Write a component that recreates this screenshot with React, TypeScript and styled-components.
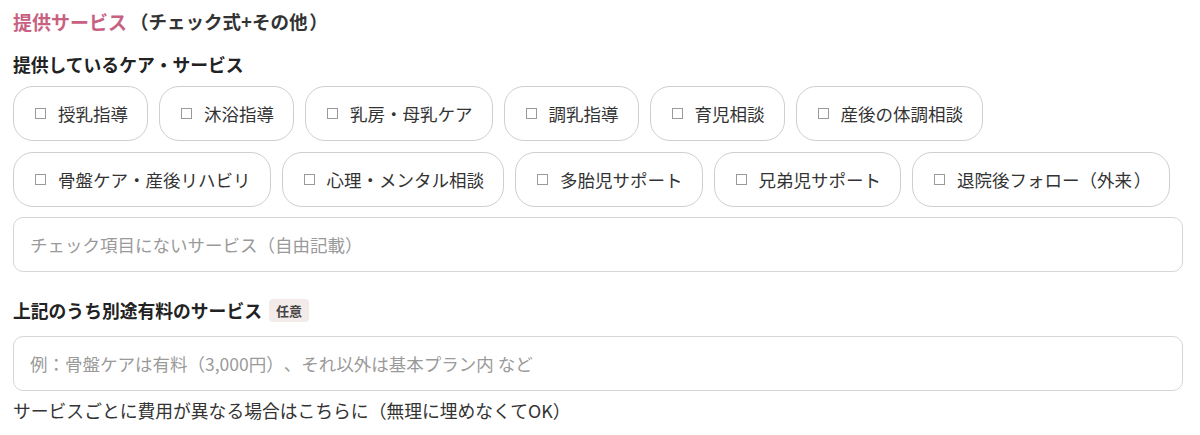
import React from "react";
import styled, { createGlobalStyle } from "styled-components";

const Global = createGlobalStyle`
  html, body { margin: 0; padding: 0; background: #ffffff; }
  body {
    font-family: "Noto Sans CJK JP", "Noto Sans", sans-serif;
    color: #333333;
    text-spacing-trim: space-all;
  }
  * { box-sizing: border-box; }
`;

const Page = styled.div`
  width: 1200px;
  padding: 7px 17px 0 13px;
  display: flex;
  flex-direction: column;
`;

const SectionTitle = styled.h2`
  margin: 0;
  height: 28px;
  display: flex;
  align-items: center;
  font-size: 19px;
  font-weight: 700;
  color: #c8617f;
`;

const TitleNote = styled.span`
  margin-left: 3px;
  font-size: 18.5px;
  color: #333333;
`;

const Punct = styled.span<{ $open?: boolean }>`
  display: inline-block;
  width: 1em;
  text-align: ${(p) => (p.$open ? "right" : "left")};
  padding: ${(p) => (p.$open ? "0 0.1em 0 0" : "0 0 0 0.1em")};
`;

const FieldLabel = styled.div<{ $mt: number }>`
  margin-top: ${(p) => p.$mt}px;
  height: 26px;
  display: flex;
  align-items: center;
  font-size: 17.8px;
  font-weight: 700;
  color: #222222;
`;

const Badge = styled.span`
  margin-left: 7px;
  padding: 2px 7px;
  border-radius: 4px;
  background: #f3ebea;
  color: #444444;
  font-size: 13px;
  font-weight: 700;
  line-height: 19px;
`;

const ChipGrid = styled.div`
  margin-top: 9px;
  display: flex;
  flex-wrap: wrap;
  gap: 11px 11px;
`;

const Chip = styled.label`
  height: 55px;
  display: inline-flex;
  align-items: center;
  padding: 0 19px 0 21px;
  border: 1px solid #cfcfcf;
  border-radius: 20px;
  background: #ffffff;
  font-size: 17.5px;
  color: #333333;
  white-space: nowrap;
`;

const Box = styled.span`
  width: 11px;
  height: 11px;
  border: 1px solid #9a9a9a;
  margin-right: 12px;
  flex: none;
`;

const TextField = styled.input<{ $mt: number }>`
  width: 100%;
  height: 55px;
  margin-top: ${(p) => p.$mt}px;
  padding: 0 16px;
  border: 1px solid #d6d6d6;
  border-radius: 10px;
  font-family: inherit;
  font-size: 17.5px;
  color: #333333;
  outline: none;
  &::placeholder { color: #9a9a9a; }
`;

const Help = styled.div`
  margin-top: 6px;
  font-size: 17.8px;
  color: #333333;
  line-height: 26px;
`;

function Jp({ text }: { text: string }) {
  const parts = text.split(/([（）])/).filter((p) => p !== "");
  return (
    <>
      {parts.map((p, i) =>
        p === "（" || p === "）" ? (
          <Punct key={i} $open={p === "（"}>
            {p}
          </Punct>
        ) : (
          <React.Fragment key={i}>{p}</React.Fragment>
        )
      )}
    </>
  );
}

const services = [
  "授乳指導",
  "沐浴指導",
  "乳房・母乳ケア",
  "調乳指導",
  "育児相談",
  "産後の体調相談",
  "骨盤ケア・産後リハビリ",
  "心理・メンタル相談",
  "多胎児サポート",
  "兄弟児サポート",
  "退院後フォロー（外来）",
];

export default function App() {
  return (
    <>
      <Global />
      <Page lang="ja">
        <SectionTitle>
          提供サービス
          <TitleNote>
            <Jp text="（チェック式+その他）" />
          </TitleNote>
        </SectionTitle>
        <FieldLabel $mt={16}>提供しているケア・サービス</FieldLabel>
        <ChipGrid>
          {services.map((s) => (
            <Chip key={s}>
              <Box />
              <Jp text={s} />
            </Chip>
          ))}
        </ChipGrid>
        <TextField $mt={10} placeholder="チェック項目にないサービス（自由記載）" />
        <FieldLabel $mt={25}>
          上記のうち別途有料のサービス<Badge>任意</Badge>
        </FieldLabel>
        <TextField
          $mt={13}
          placeholder="例：骨盤ケアは有料（3,000円）、それ以外は基本プラン内 など"
        />
        <Help>サービスごとに費用が異なる場合はこちらに（無理に埋めなくてOK）</Help>
      </Page>
    </>
  );
}
